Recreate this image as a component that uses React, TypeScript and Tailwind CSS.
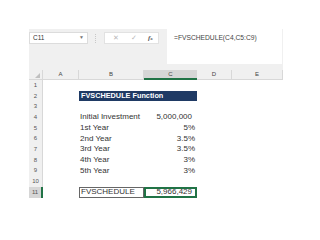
import React from "react";

const rows = [
  { n: 1 },
  { n: 2, title: true },
  { n: 3 },
  { n: 4, label: "Initial Investment", value: "5,000,000", pad: true },
  { n: 5, label: "1st Year", value: "5%" },
  { n: 6, label: "2nd Year", value: "3.5%" },
  { n: 7, label: "3rd Year", value: "3.5%" },
  { n: 8, label: "4th Year", value: "3%" },
  { n: 9, label: "5th Year", value: "3%" },
  { n: 10 },
  { n: 11, result: true },
];

const cols = ["A", "B", "C", "D", "E"];

export default function App() {
  return (
    <div className="w-[320px] h-[240px] bg-white overflow-hidden text-[#333] font-['Liberation_Sans',Arial,sans-serif]">
      <div className="ml-[29px] pt-[29px] w-[254px]">
        {/* formula bar */}
        <div className="h-[41px] bg-[#f0f0f0] flex items-start">
          <div className="mt-[3px] w-[59px] h-[12px] bg-white border border-[#dcdcdc] flex items-center justify-between px-[3px] text-[6.5px]">
            <span>C11</span>
            <span className="text-[5px] text-[#777]">▼</span>
          </div>
          <div className="mt-[5px] ml-[7px] w-[1px] h-[9px] border-l border-dotted border-[#c8c8c8]" />
          <div className="mt-[3px] ml-[8px] w-[55px] h-[12px] bg-white border border-[#e2e2e2] flex items-center text-[#b8b8b8] text-[7px]">
            <span className="ml-[8px]">✕</span>
            <span className="ml-[12px]">✓</span>
            <span className="ml-[11px] italic font-bold font-['Liberation_Serif',serif] text-[#555]">f<span className="text-[5px]">x</span></span>
          </div>
          <div className="ml-[8px] w-[115px] h-[35px] bg-white pl-[7px] pt-[4px] text-[6.7px] text-[#444]">
            =FVSCHEDULE(C4,C5:C9)
          </div>
        </div>
        {/* grid */}
        <div className="grid grid-cols-[14px_36px_65px_53px_35px_51px] text-[8px]">
          <div className="h-[10px] bg-[#f0f0f0] border-r border-b border-[#d8d8d8] relative">
            <span className="absolute right-[2px] bottom-[1px] w-0 h-0 border-l-[5px] border-l-transparent border-b-[5px] border-b-[#c0c0c0]" />
          </div>
          {cols.map((c) => (
            <div
              key={c}
              className={
                c === "C"
                  ? "h-[10px] bg-[#d6d6d6] border-b-2 border-[#217346] flex items-center justify-center text-[6px] text-[#444]"
                  : "h-[10px] bg-[#f0f0f0] border-r border-b border-[#d8d8d8] flex items-center justify-center text-[6px] text-[#444]"
              }
            >
              {c}
            </div>
          ))}
          {rows.map((r) => (
            <React.Fragment key={r.n}>
              <div
                className={
                  r.result
                    ? "h-[10.7px] bg-[#d6d6d6] border-r-2 border-[#217346] flex items-center justify-center text-[6px] text-[#555]"
                    : "h-[10.7px] bg-[#f0f0f0] border-r border-[#d8d8d8] flex items-center justify-center text-[6px] text-[#555]"
                }
              >
                {r.n}
              </div>
              <div className="h-[10.7px]" />
              {r.title ? (
                <div className="col-span-2 h-[10.7px] bg-[#1f3a64] text-white font-bold flex items-center pl-[2px] text-[7.3px]">
                  FVSCHEDULE Function
                </div>
              ) : r.result ? (
                <>
                  <div className="h-[11px] border border-[#666] flex items-center pl-[1px]">FVSCHEDULE</div>
                  <div className="h-[11px] border-2 border-[#217346] flex items-center justify-end pr-[3px]">5,966,429</div>
                </>
              ) : (
                <>
                  <div className="h-[10.7px] flex items-center pl-[1px] whitespace-nowrap">{r.label}</div>
                  <div className={r.pad ? "h-[10.7px] flex items-center justify-end pr-[5px]" : "h-[10.7px] flex items-center justify-end pr-[2px]"}>
                    {r.value}
                  </div>
                </>
              )}
              <div className="h-[10.7px]" />
              <div className="h-[10.7px]" />
            </React.Fragment>
          ))}
        </div>
      </div>
    </div>
  );
}
